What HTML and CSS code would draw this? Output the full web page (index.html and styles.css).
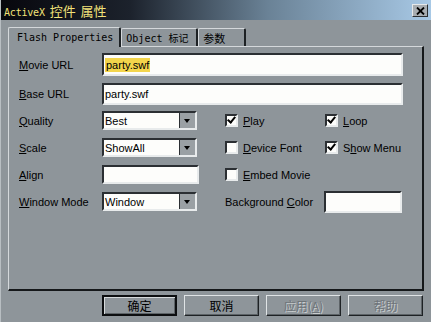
FILE: index.html
```html
<!DOCTYPE html>
<html lang="zh">
<head>
    <meta charset="UTF-8"/>
    <title>ActiveX 控件 属性</title>
    <link rel="stylesheet" href="styles.css">
</head>
<body>

<div class="window">
    <div class="titlebar">
        <span class="title"><span class="mono">ActiveX</span> 控件 属性</span>
        <span class="close">
            <svg width="9" height="8" viewBox="0 0 9 8"><path d="M1 0.5 L8 7.5 M8 0.5 L1 7.5" stroke="#000" stroke-width="1.8"/></svg>
        </span>
    </div>

    <div class="tabs">
        <div class="tab active">Flash Properties</div>
        <div class="tab">Object 标记</div>
        <div class="tab">参数</div>
    </div>

    <div class="panel">
        <div class="row row-url">
            <label class="label"><u>M</u>ovie URL</label>
            <div class="field wide"><span class="selected">party.swf</span></div>
        </div>
        <div class="row row-url row-base">
            <label class="label"><u>B</u>ase URL</label>
            <div class="field wide">party.swf</div>
        </div>

        <div class="grid">
            <label class="label"><u>Q</u>uality</label>
            <div class="field select">Best<span class="drop"></span></div>
            <div class="check"><span class="box on"></span><u>P</u>lay</div>
            <div class="check"><span class="box on"></span><u>L</u>oop</div>

            <label class="label"><u>S</u>cale</label>
            <div class="field select">ShowAll<span class="drop"></span></div>
            <div class="check"><span class="box"></span><u>D</u>evice Font</div>
            <div class="check"><span class="box on"></span>S<u>h</u>ow Menu</div>

            <label class="label"><u>A</u>lign</label>
            <div class="field plain"></div>
            <div class="check"><span class="box"></span><u>E</u>mbed Movie</div>
            <div></div>

            <label class="label"><u>W</u>indow Mode</label>
            <div class="field select">Window<span class="drop"></span></div>
            <label class="label">Background <u>C</u>olor</label>
            <div class="field color"></div>
        </div>
    </div>

    <div class="buttons">
        <button class="btn default">确定</button>
        <button class="btn">取消</button>
        <button class="btn disabled">应用(<u>A</u>)</button>
        <button class="btn disabled">帮助</button>
    </div>
</div>

</body>
</html>
```

FILE: styles.css
```css
* {
    box-sizing: border-box;
}

body {
    margin: 0;
    background: #8e959a;
    font-family: "Liberation Sans", "Noto Sans CJK SC", sans-serif;
    font-size: 11px;
    color: #000;
}

.window {
    width: 431px;
    height: 322px;
    background: #8e959a;
    border-left: 1px solid #b8bec2;
}

.titlebar {
    height: 20px;
    display: flex;
    align-items: center;
    justify-content: space-between;
    padding: 0 3px 0 3px;
    background: linear-gradient(to right, #07070d, #1c222c 30%, #6a8296 62%, #a8c9e6);
}

.title {
    color: #f2e27a;
    font-family: "Noto Sans CJK SC", sans-serif;
    font-size: 13px;
    word-spacing: 2px;
}

.mono {
    font-family: "DejaVu Sans Mono", "Liberation Mono", monospace;
    font-size: 10px;
    letter-spacing: -0.2px;
}

.close {
    width: 16px;
    height: 13px;
    background: #a8adb1;
    border: 1px solid;
    border-color: #e6e9eb #2a2e31 #2a2e31 #e6e9eb;
    display: flex;
    align-items: center;
    justify-content: center;
    margin-top: 1px;
}

.tabs {
    display: flex;
    align-items: flex-end;
    height: 26px;
    padding-left: 7px;
}

.tab {
    height: 18px;
    padding: 0 4px;
    display: flex;
    align-items: center;
    font-family: "DejaVu Sans Mono", "Noto Sans CJK SC", monospace;
    font-size: 10px;
    border-top: 1px solid #d4d8db;
    border-left: 1px solid #d4d8db;
    border-right: 2px solid #1d2124;
    border-radius: 2px 2px 0 0;
}

.tab.active {
    height: 20px;
    padding: 0 6px 0 8px;
    margin-bottom: -1px;
    background: #8e959a;
    position: relative;
    z-index: 1;
}

.tab:nth-child(2) {
    width: 77px;
}

.tab:nth-child(3) {
    width: 48px;
    font-family: "Noto Sans CJK SC", sans-serif;
    font-size: 11px;
}

.panel {
    margin-left: 7px;
    width: 416px;
    height: 245px;
    border-top: 1px solid #d4d8db;
    border-left: 1px solid #d4d8db;
    border-right: 2px solid #15181a;
    border-bottom: 2px solid #15181a;
    padding: 6px 0 0 10px;
}

.row {
    display: flex;
    align-items: center;
}

.row-url {
    height: 23px;
    margin-bottom: 7px;
}

.row-base {
    height: 22px;
    margin-bottom: 6px;
}

.label {
    width: 83px;
    flex: none;
    white-space: nowrap;
}

.field {
    height: 100%;
    background: #fdfdfb;
    border: 2px solid;
    border-color: #2b2f33 #e8ebec #e8ebec #2b2f33;
    display: flex;
    align-items: center;
    padding-left: 1px;
    font-size: 11px;
}

.field.wide {
    width: 301px;
}

.selected {
    background: #f3d54c;
    padding: 1px 1px;
}

.grid {
    display: grid;
    grid-template-columns: 83px 97px 26px 100px 78px;
    grid-template-rows: repeat(4, 19px);
    row-gap: 8px;
    align-items: center;
}

.grid > :nth-child(4n+3) {
    grid-column: 4;
}

.grid > :nth-child(4n+4) {
    grid-column: 5;
}

.grid .field {
    height: 19px;
}

.field.select {
    width: 95px;
    position: relative;
}

.field.plain {
    width: 97px;
}

.drop {
    position: absolute;
    right: 0;
    top: 0;
    width: 16px;
    height: 15px;
    background: #9aa0a4;
    border-left: 1px solid #2b2f33;
}

.drop::after {
    content: "";
    position: absolute;
    left: 4px;
    top: 6px;
    border-left: 3.5px solid transparent;
    border-right: 3.5px solid transparent;
    border-top: 4px solid #000;
}

.check {
    display: flex;
    align-items: center;
    white-space: nowrap;
}

.box {
    flex: none;
    width: 13px;
    height: 13px;
    margin-right: 5px;
    background: #fdfdfb;
    border: 2px solid;
    border-color: #2b2f33 #e8ebec #e8ebec #2b2f33;
    position: relative;
}

.box.on::after {
    content: "";
    position: absolute;
    left: 2px;
    top: -1px;
    width: 3px;
    height: 6px;
    border-right: 2px solid #000;
    border-bottom: 2px solid #000;
    transform: rotate(40deg);
}

.field.color {
    width: 78px;
    height: 22px !important;
    margin-left: -1px;
}

.buttons {
    display: flex;
    justify-content: flex-end;
    gap: 7px;
    padding: 4px 8px 0 0;
}

.btn {
    width: 75px;
    height: 21px;
    background: #8e959a;
    font-family: "Noto Sans CJK SC", sans-serif;
    font-size: 12px;
    padding: 0;
    border: 1px solid;
    border-color: #e0e4e6 #1e2225 #1e2225 #e0e4e6;
    box-shadow: inset -1px -1px 0 #5d6367;
    color: #000;
}

.btn.default {
    border: 2px solid #0c0e10;
    box-shadow: inset 1px 1px 0 #d6dadc, inset -1px -1px 0 #5d6367;
}

.btn.disabled {
    color: #6e7479;
    text-shadow: 1px 1px 0 #c8ccce;
}
```
